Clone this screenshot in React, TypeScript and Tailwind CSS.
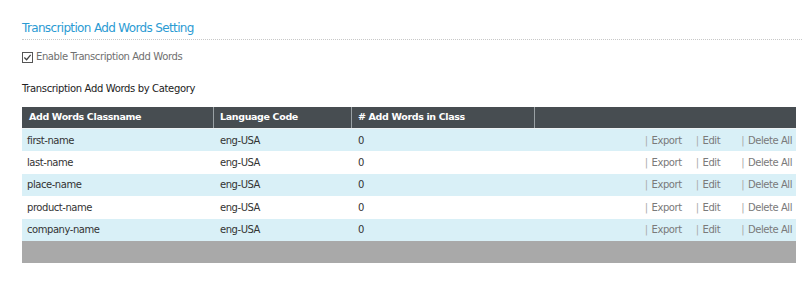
import React from 'react';

const rows = ['first-name', 'last-name', 'place-name', 'product-name', 'company-name'];

function Checkbox() {
  return (
    <span className="inline-flex h-[11px] w-[11px] items-center justify-center border border-[#555] bg-white">
      <svg viewBox="0 0 10 10" className="h-[9px] w-[9px]" fill="none" stroke="#444" strokeWidth="1.4">
        <path d="M1.5 5 L4 7.5 L8.5 2" />
      </svg>
    </span>
  );
}

function Action({ label, gap }: { label: string; gap: string }) {
  return (
    <span className={`flex items-center ${gap}`}>
      <span className="mr-[4px] text-[#aaa]">|</span>
      <span>{label}</span>
    </span>
  );
}

export default function App() {
  return (
    <div className="h-[281px] w-[808px] bg-white pl-[22px] pr-[6px] pt-[21px] font-['DejaVu_Sans',sans-serif]">
      <h2 className="text-[12px] leading-[14px] tracking-[-0.65px] text-[#2b9bd3]">Transcription Add Words Setting</h2>
      <div className="mt-[4px] border-b border-dotted border-[#c8c8c8]" />
      <label className="mt-[11px] flex items-center gap-[3px] text-[10px] leading-[12px] tracking-[-0.4px] text-[#6f6f6f]">
        <Checkbox />
        <span>Enable Transcription Add Words</span>
      </label>
      <h3 className="mt-[20px] text-[10px] leading-[12px] tracking-[-0.35px] text-[#222]">Transcription Add Words by Category</h3>

      <div className="mt-[12px] w-[774px] text-[10px] tracking-[-0.45px]">
        <div className="flex h-[22px] border-b border-[#eef2f3] bg-[#474d51] text-[9.5px] font-bold tracking-[-0.35px] text-white">
          <div className="flex w-[192px] items-center border-r border-[#9aa1a4] pl-[7px]">Add Words Classname</div>
          <div className="flex w-[138px] items-center border-r border-[#9aa1a4] pl-[6px]">Language Code</div>
          <div className="flex w-[183px] items-center border-r border-[#9aa1a4] pl-[6px]"># Add Words in Class</div>
          <div className="flex-1" />
        </div>
        {rows.map((name, i) => (
          <div
            key={name}
            className={`flex h-[22.4px] items-center text-[#333] ${i % 2 === 0 ? 'bg-[#d9f0f7]' : 'bg-white'}`}
          >
            <div className="w-[192px] pl-[5px]">{name}</div>
            <div className="w-[138px] pl-[6px]">eng-USA</div>
            <div className="w-[183px] pl-[6px]">0</div>
            <div className="flex flex-1 justify-end pr-[4px] text-[#7a7a7a]">
              <Action label="Export" gap="" />
              <Action label="Edit" gap="ml-[14px]" />
              <Action label="Delete All" gap="ml-[21px]" />
            </div>
          </div>
        ))}
        <div className="h-[22px] bg-[#a9a9a9]" />
      </div>
    </div>
  );
}
